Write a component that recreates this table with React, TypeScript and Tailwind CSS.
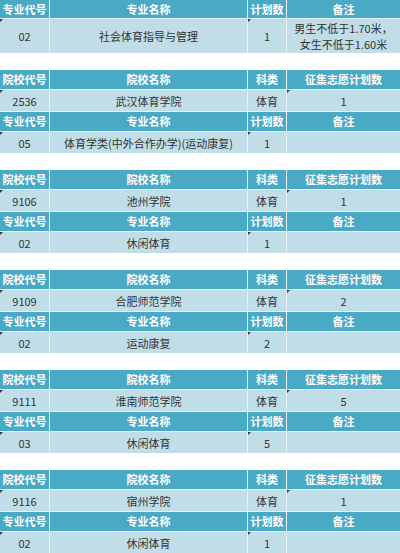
const FONT = "font-['Noto_Sans_CJK_SC','Noto_Sans',sans-serif]";

type Row = { cells: string[]; marks: number[] };

function Mark() {
  return (
    <span className="absolute left-0 top-0 h-0 w-0 border-t-[3px] border-r-[3px] border-t-[#333] border-r-transparent" />
  );
}

function HeadRow({ cells, h }: { cells: string[]; h: string }) {
  return (
    <>
      {cells.map((c, i) => (
        <div
          key={i}
          className={`${h} flex items-center justify-center bg-[#4aaac6] text-[11px] font-bold text-white`}
        >
          {c}
        </div>
      ))}
    </>
  );
}

function DataRow({ row, h }: { row: Row; h: string }) {
  return (
    <>
      {row.cells.map((c, i) => (
        <div
          key={i}
          className={`${h} relative flex flex-col items-center justify-center bg-[#c1dee8] text-center text-[11px] leading-[16px] text-[#333]`}
        >
          {row.marks.includes(i) && <Mark />}
          {c.split("\n").map((line, j) => (
            <span key={j}>{line}</span>
          ))}
        </div>
      ))}
    </>
  );
}

const schoolHead = ["院校代号", "院校名称", "科类", "征集志愿计划数"];
const majorHead = ["专业代号", "专业名称", "计划数", "备注"];

const blocks = [
  {
    school: ["2536", "武汉体育学院", "体育", "1"],
    major: ["05", "体育学类(中外合作办学)(运动康复)", "1", ""],
  },
  { school: ["9106", "池州学院", "体育", "1"], major: ["02", "休闲体育", "1", ""] },
  { school: ["9109", "合肥师范学院", "体育", "2"], major: ["02", "运动康复", "2", ""] },
  { school: ["9111", "淮南师范学院", "体育", "5"], major: ["03", "休闲体育", "5", ""] },
  { school: ["9116", "宿州学院", "体育", "1"], major: ["02", "休闲体育", "1", ""] },
];

const grid = "grid grid-cols-[49px_197px_38px_1fr] gap-px bg-[#e6f2f6]";

export default function App() {
  return (
    <div className={`${FONT} w-[400px] h-[553px] overflow-hidden bg-white flex flex-col gap-[17px]`}>
      <div className={grid}>
        <HeadRow cells={majorHead} h="h-[18px]" />
        <DataRow
          row={{
            cells: ["02", "社会体育指导与管理", "1", "男生不低于1.70米，\n女生不低于1.60米"],
            marks: [0, 2],
          }}
          h="h-[34px]"
        />
      </div>
      {blocks.map((b, i) => (
        <div key={i} className={grid}>
          <HeadRow cells={schoolHead} h="h-[19px]" />
          <DataRow row={{ cells: b.school, marks: [0, 3] }} h="h-[21px]" />
          <HeadRow cells={majorHead} h="h-[19px]" />
          <DataRow row={{ cells: b.major, marks: [0, 2] }} h="h-[21px]" />
        </div>
      ))}
    </div>
  );
}
